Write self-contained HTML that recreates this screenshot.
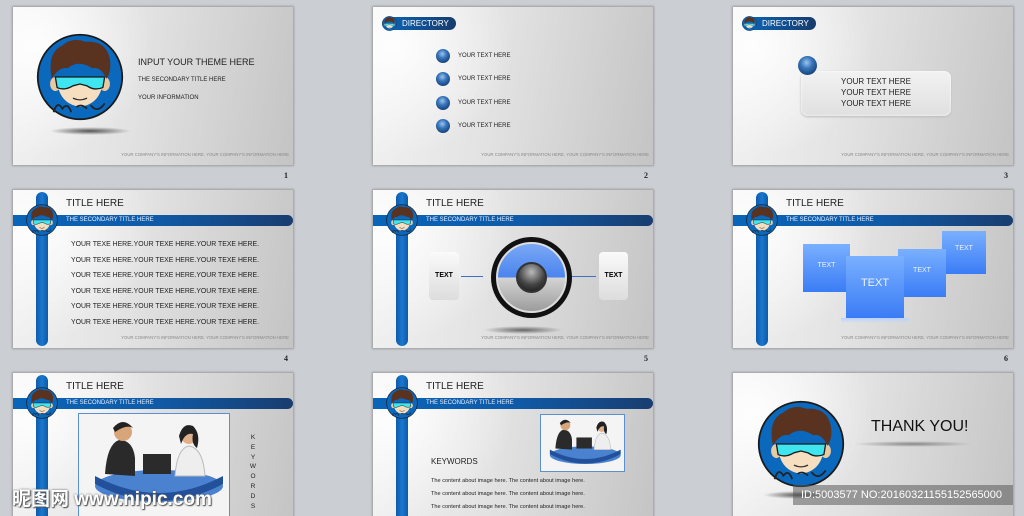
<!DOCTYPE html>
<html><head><meta charset="utf-8"><style>
*{margin:0;padding:0;box-sizing:border-box}
html,body{width:1024px;height:516px;overflow:hidden}
body{background:#cbced3;font-family:"Liberation Sans",sans-serif;position:relative}
.s{position:absolute;width:280px;height:158px;overflow:hidden;background:radial-gradient(ellipse 120px 110px at 20px 40px,rgba(255,255,255,.9),rgba(255,255,255,0)),linear-gradient(100deg,#f3f3f3 0%,#e2e2e2 45%,#c4c4c4 100%);box-shadow:0 0 2px 1px #9a9ca0}
.a{position:absolute;font-size:10px;color:#222}
.n{position:absolute;font:bold 8px "Liberation Serif",serif;color:#222}
.f{position:absolute;right:4px;top:145px;font-size:4.3px;color:#888;white-space:nowrap}
.vb{position:absolute;left:23px;top:2px;width:12px;height:154px;border-radius:6px;background:linear-gradient(90deg,#0d5aa8,#1a78d0,#0d5aa8)}
.hb{position:absolute;left:0;top:25px;width:280px;height:11px;border-radius:0 6px 6px 0;background:linear-gradient(90deg,#0a64b8,#0f5ba8 50%,#193d70)}
.ti{position:absolute;left:53px;top:8px;font-size:10px;color:#222}
.st{position:absolute;left:53px;top:27px;font-size:6px;color:#e8f0ff}
.av{position:absolute}
.pill{position:absolute;left:9px;top:10px;width:74px;height:13px;border-radius:7px;background:linear-gradient(90deg,#0a66bb,#183c6c);color:#fff;font-size:8px;line-height:13px;padding-left:20px}
.sp{position:absolute;border-radius:50%;background:radial-gradient(circle at 45% 35%,#9fc4ee 0,#3a77bd 35%,#123d74 80%)}
.bt{position:absolute;font-size:6px;color:#222}
</style></head><body>
<svg width="0" height="0" style="position:absolute"><defs>
<symbol id="av" viewBox="0 0 100 100">
<circle cx="50" cy="50" r="48" fill="#0a68bd" stroke="#1a1a1a" stroke-width="2"/>
<ellipse cx="22" cy="58" rx="6" ry="8" fill="#e9c9a0"/><ellipse cx="78" cy="58" rx="6" ry="8" fill="#e9c9a0"/>
<path d="M24 50 Q24 80 50 84 Q76 80 76 50 Z" fill="#f6dfc0"/>
<path d="M18 52 Q12 22 30 14 Q42 4 56 10 Q80 8 84 30 Q86 44 80 52 Q74 38 64 40 Q48 30 36 40 Q26 38 18 52Z" fill="#5a3220"/>
<path d="M22 50 L78 50 L76 62 Q66 66 58 60 L50 58 L42 60 Q32 66 24 62Z" fill="#3fe6ef" stroke="#1a1a1a" stroke-width="1.5"/>
<path d="M42 74 Q50 78 58 74" stroke="#333" stroke-width="1.5" fill="none"/>
<path d="M20 90 Q24 76 30 86 Q36 78 40 90 M46 84 Q52 80 58 86 M62 82 Q70 92 78 80" stroke="#222" stroke-width="2" fill="none"/>
</symbol>
<symbol id="ppl" viewBox="0 0 150 100">
<rect width="150" height="100" fill="#f4f4f4"/>
<ellipse cx="80" cy="72" rx="64" ry="16" fill="#4a82d0"/>
<path d="M16 62 Q80 96 144 62 L144 70 Q80 104 16 70Z" fill="#23509a"/>
<path d="M26 60 Q28 30 40 26 Q54 26 56 44 L56 62Z" fill="#2a2a2a"/>
<circle cx="44" cy="18" r="9" fill="#d8a47a"/><path d="M34 14 Q44 2 54 14 Q48 10 36 18Z" fill="#222"/>
<path d="M96 62 Q98 34 110 32 Q124 34 126 62Z" fill="#eee" stroke="#bbb"/>
<circle cx="110" cy="22" r="8" fill="#e0b08a"/><path d="M100 22 Q104 8 114 12 Q122 20 118 34 Q112 30 114 20 Q106 18 102 30Z" fill="#222"/>
<rect x="64" y="40" width="28" height="20" fill="#2b2b2b"/>
</symbol>
</defs></svg>

<div class="s" style="left:13px;top:7px">
<div style="position:absolute;left:36px;top:120px;width:82px;height:8px;border-radius:50%;background:radial-gradient(ellipse,#555 0,rgba(0,0,0,0) 70%)"></div>
<svg class="av" style="left:23px;top:26px" width="88" height="88"><use href="#av"/></svg>
<div class="a" style="left:125px;top:50px;font-size:9px">INPUT YOUR THEME HERE</div>
<div class="a" style="left:125px;top:70px;font-size:6px">THE SECONDARY TITLE HERE</div>
<div class="a" style="left:125px;top:88px;font-size:6px">YOUR INFORMATION</div>
<div class="f">YOUR COMPANY'S INFORMATION HERE. YOUR COMPANY'S INFORMATION HERE</div>
</div>
<div class="n" style="left:284px;top:171px">1</div>

<div class="s" style="left:373px;top:7px">
<div class="pill">DIRECTORY</div>
<svg class="av" style="left:9px;top:9px" width="15" height="15"><use href="#av"/></svg>
<div class="sp" style="left:63px;top:42px;width:14px;height:14px"></div><div class="bt" style="left:85px;top:46px">YOUR TEXT HERE</div>
<div class="sp" style="left:63px;top:65px;width:14px;height:14px"></div><div class="bt" style="left:85px;top:69px">YOUR TEXT HERE</div>
<div class="sp" style="left:63px;top:89px;width:14px;height:14px"></div><div class="bt" style="left:85px;top:93px">YOUR TEXT HERE</div>
<div class="sp" style="left:63px;top:112px;width:14px;height:14px"></div><div class="bt" style="left:85px;top:116px">YOUR TEXT HERE</div>
<div class="f">YOUR COMPANY'S INFORMATION HERE. YOUR COMPANY'S INFORMATION HERE</div>
</div>
<div class="n" style="left:644px;top:171px">2</div>

<div class="s" style="left:733px;top:7px">
<div class="pill">DIRECTORY</div>
<svg class="av" style="left:9px;top:9px" width="15" height="15"><use href="#av"/></svg>
<div style="position:absolute;left:68px;top:64px;width:150px;height:45px;border-radius:7px;background:linear-gradient(#f2f2f2,#e0e0e0);box-shadow:0 0 2px #fff inset,0 1px 2px #bbb"></div>
<div class="sp" style="left:65px;top:49px;width:19px;height:19px"></div>
<div class="a" style="left:78px;top:69px;width:130px;text-align:center;font-size:8px;line-height:11px">YOUR TEXT HERE<br>YOUR TEXT HERE<br>YOUR TEXT HERE</div>
<div class="f">YOUR COMPANY'S INFORMATION HERE. YOUR COMPANY'S INFORMATION HERE</div>
</div>
<div class="n" style="left:1004px;top:171px">3</div>

<div class="s" style="left:13px;top:190px">
<div class="vb"></div><div class="hb"></div>
<svg class="av" style="left:13px;top:14px" width="32" height="32"><use href="#av"/></svg>
<div class="ti">TITLE HERE</div><div class="st">THE SECONDARY TITLE HERE</div>
<div class="a" style="left:58px;top:47px;font-size:6.9px;line-height:15.6px">YOUR TEXE HERE.YOUR TEXE HERE.YOUR TEXE HERE.<br>YOUR TEXE HERE.YOUR TEXE HERE.YOUR TEXE HERE.<br>YOUR TEXE HERE.YOUR TEXE HERE.YOUR TEXE HERE.<br>YOUR TEXE HERE.YOUR TEXE HERE.YOUR TEXE HERE.<br>YOUR TEXE HERE.YOUR TEXE HERE.YOUR TEXE HERE.<br>YOUR TEXE HERE.YOUR TEXE HERE.YOUR TEXE HERE.</div>
<div class="f">YOUR COMPANY'S INFORMATION HERE. YOUR COMPANY'S INFORMATION HERE</div>
</div>
<div class="n" style="left:284px;top:354px">4</div>

<div class="s" style="left:373px;top:190px">
<div class="vb"></div><div class="hb"></div>
<svg class="av" style="left:13px;top:14px" width="32" height="32"><use href="#av"/></svg>
<div class="ti">TITLE HERE</div><div class="st">THE SECONDARY TITLE HERE</div>
<div style="position:absolute;left:56px;top:62px;width:30px;height:48px;border-radius:4px;background:linear-gradient(#fafafa,#ddd);font-weight:bold;font-size:7px;text-align:center;line-height:48px">TEXT</div>
<div style="position:absolute;left:226px;top:62px;width:29px;height:48px;border-radius:4px;background:linear-gradient(#fafafa,#ddd);font-weight:bold;font-size:7px;text-align:center;line-height:48px">TEXT</div>
<div style="position:absolute;left:88px;top:86px;width:22px;height:1px;background:#3a72c8"></div>
<div style="position:absolute;left:198px;top:86px;width:25px;height:1px;background:#3a72c8"></div>
<div style="position:absolute;left:110px;top:136px;width:80px;height:8px;border-radius:50%;background:radial-gradient(ellipse,#666 0,rgba(0,0,0,0) 70%)"></div>
<div style="position:absolute;left:118px;top:47px;width:81px;height:81px;border-radius:50%;background:#111;padding:5px">
<div style="width:71px;height:71px;border-radius:50%;overflow:hidden;background:linear-gradient(#7aa8f5 0,#4a84ee 50%,#d5d5d5 50%,#9c9c9c 100%);position:relative;border:2px solid #ddd">
<div style="position:absolute;left:18px;top:18px;width:31px;height:31px;border-radius:50%;background:radial-gradient(circle at 50% 30%,#bbb,#444 55%,#111);border:2px solid #333"></div></div></div>
<div class="f">YOUR COMPANY'S INFORMATION HERE. YOUR COMPANY'S INFORMATION HERE</div>
</div>
<div class="n" style="left:644px;top:354px">5</div>

<div class="s" style="left:733px;top:190px">
<div class="vb"></div><div class="hb"></div>
<svg class="av" style="left:13px;top:14px" width="32" height="32"><use href="#av"/></svg>
<div class="ti">TITLE HERE</div><div class="st">THE SECONDARY TITLE HERE</div>
<div style="position:absolute;left:70px;top:54px;width:47px;height:48px;background:linear-gradient(#7ab0ff,#3a7cf5);color:#eaf2ff;font-size:7px;text-align:center;padding-top:18px">TEXT</div>
<div style="position:absolute;left:209px;top:41px;width:44px;height:43px;background:linear-gradient(#7ab0ff,#3a7cf5);color:#eaf2ff;font-size:7px;text-align:center;padding-top:14px">TEXT</div>
<div style="position:absolute;left:165px;top:59px;width:48px;height:48px;background:linear-gradient(#7ab0ff,#3a7cf5);color:#eaf2ff;font-size:7px;text-align:center;padding-top:18px">TEXT</div>
<div style="position:absolute;left:113px;top:66px;width:58px;height:62px;background:linear-gradient(#7ab0ff,#3a7cf5);color:#eaf2ff;font-size:11px;text-align:center;padding-top:21px">TEXT</div>
<div style="position:absolute;left:108px;top:128px;width:68px;height:5px;background:linear-gradient(#b8d2ff,rgba(200,220,255,0))"></div>
<div class="f">YOUR COMPANY'S INFORMATION HERE. YOUR COMPANY'S INFORMATION HERE</div>
</div>
<div class="n" style="left:1004px;top:354px">6</div>

<div class="s" style="left:13px;top:373px">
<div class="vb"></div><div class="hb"></div>
<svg class="av" style="left:13px;top:14px" width="32" height="32"><use href="#av"/></svg>
<div class="ti">TITLE HERE</div><div class="st">THE SECONDARY TITLE HERE</div>
<svg style="position:absolute;left:65px;top:40px;border:1px solid #5a8fd0;background:#f4f4f4" width="152" height="110"><use href="#ppl" width="150" height="100"/></svg>
<div class="a" style="left:236px;top:60px;font-size:6.5px;line-height:9.8px;width:8px;text-align:center">K<br>E<br>Y<br>W<br>O<br>R<br>D<br>S</div>
</div>

<div class="s" style="left:373px;top:373px">
<div class="vb"></div><div class="hb"></div>
<svg class="av" style="left:13px;top:14px" width="32" height="32"><use href="#av"/></svg>
<div class="ti">TITLE HERE</div><div class="st">THE SECONDARY TITLE HERE</div>
<svg style="position:absolute;left:167px;top:41px;border:1px solid #5a8fd0;background:#f4f4f4" width="85" height="58"><use href="#ppl" width="83" height="56"/></svg>
<div class="a" style="left:58px;top:84px;font-size:8px">KEYWORDS</div>
<div class="a" style="left:58px;top:102px;font-size:5.6px;line-height:13px">The content about image here. The content about image here.<br>The content about image here. The content about image here.<br>The content about image here. The content about image here.</div>
</div>

<div class="s" style="left:733px;top:373px">
<div style="position:absolute;left:30px;top:118px;width:72px;height:8px;border-radius:50%;background:radial-gradient(ellipse,#555 0,rgba(0,0,0,0) 70%)"></div>
<svg class="av" style="left:24px;top:27px" width="88" height="88"><use href="#av"/></svg>
<div class="a" style="left:138px;top:45px;font-size:16px;color:#111">THANK YOU!</div>
<div style="position:absolute;left:120px;top:68px;width:120px;height:6px;border-radius:50%;background:radial-gradient(ellipse,#888 0,rgba(0,0,0,0) 70%)"></div>
</div>

<div style="position:absolute;left:793px;top:485px;width:220px;height:20px;background:rgba(90,90,90,.55);color:#fff;font-size:11px;line-height:20px;padding-left:8px;white-space:nowrap;overflow:hidden">ID:5003577 NO:20160321155152565000</div>
<div style="position:absolute;left:12px;top:484px;font:bold 19px 'Liberation Sans','Noto Sans CJK SC',sans-serif;color:#fff;text-shadow:0 0 2px #555,1px 1px 1px #555;white-space:nowrap">昵图网 www.nipic.com</div>
</body></html>
